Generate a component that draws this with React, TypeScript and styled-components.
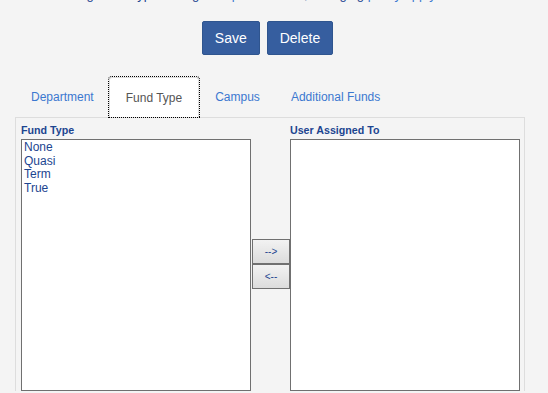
import styled, { createGlobalStyle } from "styled-components";

const GlobalStyle = createGlobalStyle`
  html, body {
    margin: 0;
    padding: 0;
    background: #f4f4f4;
    font-family: "Liberation Sans", Arial, sans-serif;
    overflow: hidden;
  }
`;

const Page = styled.div`
  width: 548px;
  height: 393px;
  overflow: hidden;
`;

const Intro = styled.p`
  margin: -13px 0 0 0;
  padding-left: 62px;
  font-size: 13px;
  line-height: 15px;
  color: #1c4590;
  white-space: nowrap;
`;

const IntroLink = styled.span`
  color: #3b78d0;
`;

const ActionBar = styled.div`
  display: flex;
  justify-content: center;
  gap: 7px;
  margin-top: 19px;
  padding-right: 13px;
`;

const PrimaryButton = styled.button`
  height: 34px;
  padding: 0 12px;
  border: 1px solid #2f558f;
  border-radius: 2px;
  background: #365e9f;
  color: #ffffff;
  font-family: "Liberation Sans", Arial, sans-serif;
  font-size: 14px;
  cursor: pointer;
`;

const TabBar = styled.div`
  display: flex;
  margin: 22px 0 0 15px;
  height: 40px;
  position: relative;
  z-index: 1;
`;

const Tab = styled.div<{ $active?: boolean }>`
  display: flex;
  align-items: center;
  padding: ${(p) => (p.$active ? "0 16px" : "0 15px 0 16px")};
  font-size: 12px;
  color: ${(p) => (p.$active ? "#555555" : "#3b78d0")};
  background: ${(p) => (p.$active ? "#ffffff" : "transparent")};
  border: ${(p) => (p.$active ? "1px solid #dddddd" : "none")};
  border-bottom: none;
  border-radius: 3px 3px 0 0;
  outline: ${(p) => (p.$active ? "1px dotted #000000" : "none")};
  outline-offset: 0;
  box-sizing: border-box;
  height: 40px;
  margin-bottom: -1px;
`;

const Panel = styled.div`
  margin-left: 15px;
  width: 510px;
  box-sizing: border-box;
  border: 1px solid #dddddd;
  border-bottom: none;
  padding: 6px 4px 0 5px;
  display: grid;
  grid-template-columns: 230px 39px 230px;
  grid-template-rows: 13px 252px;
  row-gap: 2px;
`;

const FieldLabel = styled.div`
  font-size: 10.67px;
  font-weight: bold;
  line-height: 13px;
  color: #1c4590;
`;

const ListBox = styled.div`
  box-sizing: border-box;
  border: 1px solid #707070;
  background: #ffffff;
  padding: 1px 2px;
`;

const ListItem = styled.div`
  font-size: 12px;
  line-height: 13.5px;
  color: #1c4590;
`;

const MoveColumn = styled.div`
  display: flex;
  flex-direction: column;
  justify-content: center;
  align-items: center;
  padding-left: 1px;
  padding-bottom: 3px;
`;

const MoveButton = styled.button`
  width: 38px;
  height: 25px;
  box-sizing: border-box;
  border: 1px solid #707070;
  background: linear-gradient(#f2f2f2, #dcdcdc);
  color: #1c4590;
  font-family: "Liberation Sans", Arial, sans-serif;
  font-size: 10px;
  padding: 0;
  margin: 0;
`;

const fundTypes = ["None", "Quasi", "Term", "True"];

export default function App() {
  return (
    <Page>
      <GlobalStyle />
      <Intro>
        Assign fund types using <IntroLink>the options</IntroLink> below; changing <IntroLink>policy apply</IntroLink>
      </Intro>
      <ActionBar>
        <PrimaryButton>Save</PrimaryButton>
        <PrimaryButton>Delete</PrimaryButton>
      </ActionBar>
      <TabBar>
        <Tab>Department</Tab>
        <Tab $active>Fund Type</Tab>
        <Tab>Campus</Tab>
        <Tab>Additional Funds</Tab>
      </TabBar>
      <Panel>
        <FieldLabel>Fund Type</FieldLabel>
        <div />
        <FieldLabel>User Assigned To</FieldLabel>
        <ListBox>
          {fundTypes.map((f) => (
            <ListItem key={f}>{f}</ListItem>
          ))}
        </ListBox>
        <MoveColumn>
          <MoveButton>--&gt;</MoveButton>
          <MoveButton>&lt;--</MoveButton>
        </MoveColumn>
        <ListBox />
      </Panel>
    </Page>
  );
}
